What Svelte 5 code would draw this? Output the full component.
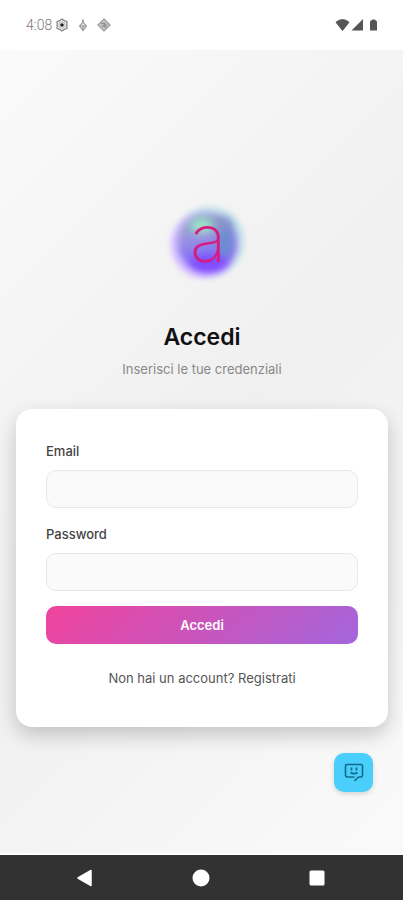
<script lang="ts">
  let email: string = "",
    password: string = "";

  function submit() {
    password = "";
  }
</script>

<div class="screen">
  <header class="status">
    <time>4:08</time>
    <svg class="gear" width="14" height="14" viewBox="0 0 14 14">
      <path
        d="M7 1 L9 2.4 L12 3.6 L11.8 7 L12 10.4 L9 11.6 L7 13 L5 11.6 L2 10.4 L2.2 7 L2 3.6 L5 2.4 Z"
        fill="#eee"
        stroke="#888"
        stroke-width="1.3"
      />
      <circle cx="7" cy="7" r="3.2" fill="none" stroke="#bbb" />
      <circle cx="7" cy="7" r="1.8" fill="#222" />
    </svg>
    <svg class="drop" width="10" height="14" viewBox="0 0 10 14">
      <path d="M5 1.5 V5" stroke="#999" stroke-width="1.8" />
      <path
        d="M5 4 L8.5 8 L5 12.5 L1.5 8 Z M1.5 8 H8.5 M5 8 V12"
        fill="#ddd"
        stroke="#999"
        stroke-width="1.1"
      />
    </svg>
    <svg class="tag" width="14" height="14" viewBox="0 0 14 14">
      <path
        d="M7 1 L13 7 L7 13 L1 7 Z"
        fill="#ccc"
        stroke="#999"
        stroke-width="1.2"
      />
      <path
        d="M4 6 L7 5 L10 8 M5 9 L7 7 L8.5 10"
        fill="none"
        stroke="#888"
        stroke-width="1.2"
      />
    </svg>
    <svg class="signals" width="44" height="14" viewBox="0 0 44 14">
      <path
        d="M1 4.2 Q7.5 -1 14 4.2 L7.5 12.5 Z"
        fill="#555"
        stroke="#555"
        stroke-linejoin="round"
      />
      <path d="M28 1 V12.5 H16.5 Z" fill="#555" />
      <path
        d="M35 4 Q35 2.5 37 2 Q38.500 0.500 40 2 Q42 2.500 42 4 V12.5 H35 Z"
        fill="#555"
      />
    </svg>
  </header>

  <main>
    <svg class="logo" width="100" height="100" viewBox="0 0 100 100">
      <defs>
        <linearGradient id="orb" x1="0.3" y1="0" x2="0.45" y2="1">
          <stop offset="0" stop-color="#8bb4bd" />
          <stop offset="0.4" stop-color="#9a92e0" />
          <stop offset="0.7" stop-color="#8575f2" />
          <stop offset="1" stop-color="#8650ff" />
        </linearGradient>
        <filter id="edge" x="-30%" y="-30%" width="160%" height="160%">
          <feGaussianBlur stdDeviation="3" />
        </filter>
        <filter id="soft" x="-60%" y="-60%" width="220%" height="220%">
          <feGaussianBlur stdDeviation="4" />
        </filter>
      </defs>
      <circle cx="54" cy="49" r="34" fill="#bcdfe6" filter="url(#edge)" />
      <circle cx="48" cy="53" r="33" fill="#d3baff" filter="url(#edge)" />
      <circle cx="51" cy="51" r="29" fill="url(#orb)" filter="url(#edge)" />
      <ellipse cx="69" cy="48" rx="8" ry="20" fill="#6c8ccf" filter="url(#soft)" />
      <ellipse cx="64" cy="32" rx="11" ry="6" fill="#8995c8" filter="url(#soft)" />
      <ellipse cx="46" cy="34" rx="11" ry="7" fill="#9debc6" filter="url(#soft)" />
      <ellipse cx="53" cy="71" rx="18" ry="7" fill="#8148ff" filter="url(#soft)" />
      <text x="52" y="70" text-anchor="middle">a</text>
    </svg>

    <h1>Accedi</h1>
    <p class="subtitle">Inserisci le tue credenziali</p>

    <form class="card" on:submit|preventDefault={submit}>
      <label for="email">Email</label>
      <input id="email" type="email" autocomplete="email" bind:value={email} />
      <label for="password">Password</label>
      <input
        id="password"
        type="password"
        autocomplete="current-password"
        bind:value={password}
      />
      <button class="submit" type="submit">Accedi</button>
      <p class="register">Non hai un account? <a href="#registrati">Registrati</a></p>
    </form>

    <button class="chat" type="button" aria-label="Chat">
      <svg width="20" height="20" viewBox="0 0 20 20">
        <path
          d="M10.5 14 H3 Q1.5 14 1.5 12.5 V3 Q1.5 1.5 3 1.5 H17 Q18.5 1.5 18.5 3 V12.5 Q18.5 14 17 14 H14.5 L10.5 18"
          fill="none"
          stroke="#126a8b"
          stroke-width="1.6"
          stroke-linejoin="round"
        />
        <path
          d="M7.500 4.500 V7.500 M12.500 4.500 V7.500 M6.500 9.500 Q10 11.800 13.500 9.500"
          fill="none"
          stroke="#126a8b"
          stroke-width="1.7"
        />
      </svg>
    </button>
  </main>

  <nav>
    <button type="button" aria-label="Indietro">
      <svg width="20" height="20" viewBox="0 0 20 20">
        <path
          d="M3 10 L16 2.5 V17.5 Z"
          fill="#fff"
          stroke="#fff"
          stroke-width="1.5"
          stroke-linejoin="round"
        />
      </svg>
    </button>
    <button type="button" aria-label="Home">
      <svg width="20" height="20" viewBox="0 0 20 20">
        <circle cx="10" cy="10" r="8.5" fill="#fff" />
      </svg>
    </button>
    <button type="button" aria-label="Recenti">
      <svg width="20" height="20" viewBox="0 0 20 20">
        <rect x="2.5" y="2.5" width="15" height="15" rx="1.5" fill="#fff" />
      </svg>
    </button>
  </nav>
</div>

<style>
  :global(body) {
    margin: 0;
  }
  .screen {
    display: flex;
    flex-direction: column;
    min-height: 100vh;
    font-family: Inter, "Liberation Sans", sans-serif;
    color: #444;
  }
  .status {
    display: flex;
    align-items: center;
    box-sizing: border-box;
    height: 50px;
    padding: 0 24px 0 26px;
    background: #fff;
  }
  time {
    font-family: Roboto, sans-serif;
    font-size: 14px;
    font-weight: 300;
    color: #777;
  }
  .gear {
    margin-left: 3px;
  }
  .drop {
    margin-left: 9px;
  }
  .tag {
    margin-left: 9px;
  }
  .signals {
    margin-left: auto;
  }
  main {
    position: relative;
    flex: 1;
    display: flex;
    flex-direction: column;
    align-items: center;
    box-sizing: border-box;
    padding: 142px 15px 0 16px;
    background: linear-gradient(135deg, #fafafa, #f0f0f0 50%, #fafafa);
    border-bottom: 2px solid #fff;
  }
  .logo {
    margin-left: 8px;
  }
  .logo text {
    font-family: Inter, sans-serif;
    font-weight: 200;
    font-size: 66px;
    fill: #d81b7f;
  }
  h1 {
    margin: 30px 0 0;
    font-size: 23px;
    line-height: 30px;
    font-weight: 600;
    color: #111;
  }
  .subtitle {
    margin: 7px 0 0;
    font-size: 13px;
    line-height: 20px;
    color: #888;
  }
  .card {
    display: flex;
    flex-direction: column;
    align-self: stretch;
    box-sizing: border-box;
    margin-top: 30px;
    padding: 31px 30px 39px;
    background: #fff;
    border-radius: 16px;
    box-shadow: 0 8px 20px rgba(0, 0, 0, 0.2);
  }
  label {
    margin-bottom: 8px;
    font-size: 13px;
    line-height: 22px;
    font-weight: 500;
  }
  input {
    box-sizing: border-box;
    width: 100%;
    height: 38px;
    margin: 0 0 15px;
    padding: 0 12px;
    font: inherit;
    font-size: 13px;
    background: #fafafa;
    border: 1px solid #e8e8e8;
    border-radius: 10px;
  }
  .submit {
    height: 38px;
    border: none;
    border-radius: 10px;
    font: inherit;
    font-size: 13px;
    font-weight: 600;
    color: #fff;
    background: linear-gradient(135deg, #f0439c, #a366dc);
  }
  .register {
    margin: 24px 0 0;
    font-size: 13px;
    line-height: 20px;
    text-align: center;
    color: #555;
  }
  .register a {
    color: inherit;
    text-decoration: none;
  }
  .chat {
    position: absolute;
    right: 30px;
    bottom: 61px;
    display: grid;
    place-items: center;
    width: 39px;
    height: 39px;
    padding: 0;
    border: none;
    border-radius: 10px;
    background: #4acffc;
    box-shadow: 0 2px 5px rgba(0, 0, 0, 0.15);
  }
  nav {
    display: flex;
    justify-content: space-around;
    align-items: center;
    height: 45px;
    padding: 0 28px 0 27px;
    background: #323232;
  }
  nav button {
    display: flex;
    padding: 0;
    border: none;
    background: none;
  }
</style>
